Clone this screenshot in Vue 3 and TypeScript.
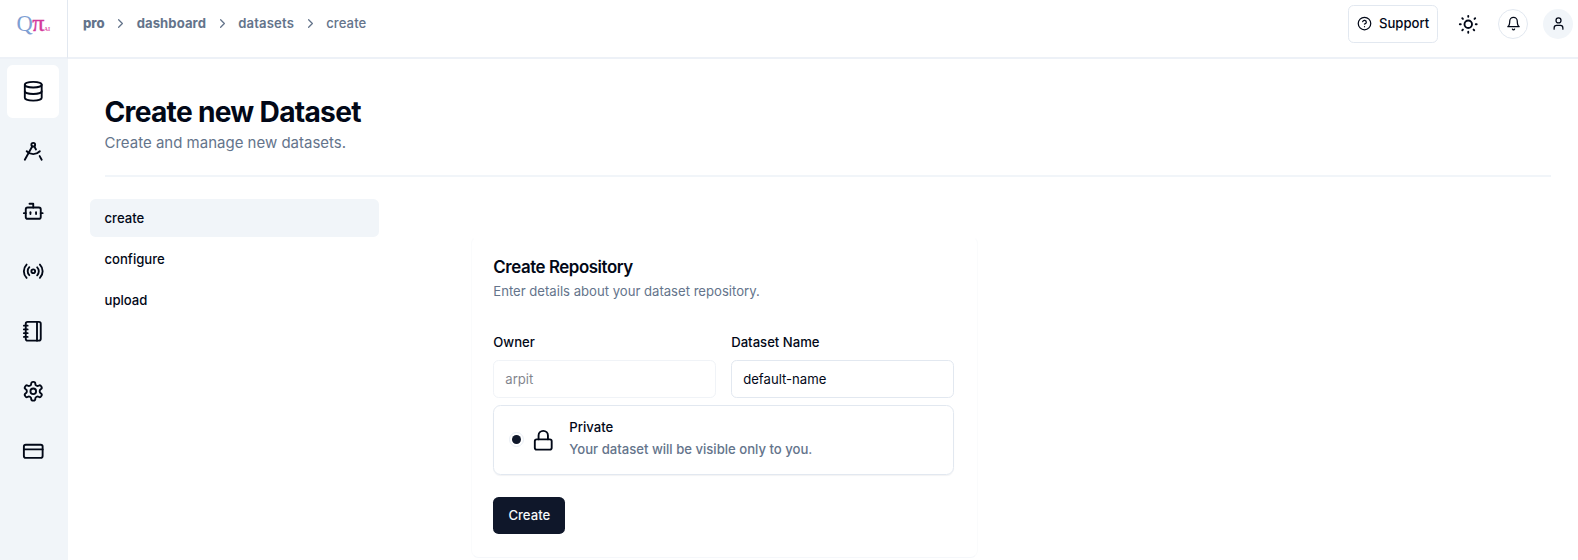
<script setup lang="ts">
type NavIcon = { name: string; body: string; active?: boolean }

const navItems: NavIcon[] = [
  { name: 'datasets', active: true, body: '<ellipse cx="12" cy="5" rx="9" ry="3"/><path d="M3 5V19A9 3 0 0 0 21 19V5"/><path d="M3 12A9 3 0 0 0 21 12"/>' },
  { name: 'design', body: '<circle cx="12" cy="5" r="2"/><path d="m3 21 8.02-14.26"/><path d="m12.99 6.74 1.93 3.44"/><path d="M19 12c-3.87 4-10.13 4-14 0"/><path d="m21 21-2.16-3.84"/>' },
  { name: 'models', body: '<path d="M12 8V4H8"/><rect width="16" height="12" x="4" y="8" rx="2"/><path d="M2 14h2"/><path d="M20 14h2"/><path d="M15 13v2"/><path d="M9 13v2"/>' },
  { name: 'endpoints', body: '<path d="M4.9 19.1C1 15.2 1 8.8 4.9 4.9"/><path d="M7.8 16.2c-2.3-2.3-2.3-6.1 0-8.5"/><circle cx="12" cy="12" r="2"/><path d="M16.2 7.8c2.3 2.3 2.3 6.1 0 8.5"/><path d="M19.1 4.9C23 8.8 23 15.1 19.1 19"/>' },
  { name: 'notebooks', body: '<path d="M2 6h4"/><path d="M2 10h4"/><path d="M2 14h4"/><path d="M2 18h4"/><rect width="16" height="20" x="4" y="2" rx="2"/><path d="M16 2v20"/>' },
  { name: 'settings', body: '<path d="M12.22 2h-.44a2 2 0 0 0-2 2v.18a2 2 0 0 1-1 1.73l-.43.25a2 2 0 0 1-2 0l-.15-.08a2 2 0 0 0-2.73.73l-.22.38a2 2 0 0 0 .73 2.73l.15.1a2 2 0 0 1 1 1.72v.51a2 2 0 0 1-1 1.74l-.15.09a2 2 0 0 0-.73 2.73l.22.38a2 2 0 0 0 2.73.73l.15-.08a2 2 0 0 1 2 0l.43.25a2 2 0 0 1 1 1.73V20a2 2 0 0 0 2 2h.44a2 2 0 0 0 2-2v-.18a2 2 0 0 1 1-1.73l.43-.25a2 2 0 0 1 2 0l.15.08a2 2 0 0 0 2.73-.73l.22-.39a2 2 0 0 0-.73-2.73l-.15-.08a2 2 0 0 1-1-1.74v-.5a2 2 0 0 1 1-1.74l.15-.09a2 2 0 0 0 .73-2.73l-.22-.38a2 2 0 0 0-2.73-.73l-.15.08a2 2 0 0 1-2 0l-.43-.25a2 2 0 0 1-1-1.73V4a2 2 0 0 0-2-2z"/><circle cx="12" cy="12" r="3"/>' },
  { name: 'billing', body: '<rect width="20" height="14" x="2" y="5" rx="2"/><path d="M2 10h20"/>' },
]

const crumbs: string[] = ['pro', 'dashboard', 'datasets', 'create']
const steps: string[] = ['create', 'configure', 'upload']
</script>

<template>
  <div class="app">
    <aside class="rail">
      <div class="logo">
        <span class="logo-q">Q</span><span class="logo-pi">π</span><span class="logo-ai">AI</span>
      </div>
      <nav class="rail-nav">
        <a v-for="item in navItems" :key="item.name" class="rail-item" :class="{ active: item.active }">
          <svg class="icon" viewBox="0 0 24 24" v-html="item.body" />
        </a>
      </nav>
    </aside>

    <div class="content">
      <header class="topbar">
        <div class="crumbs">
          <template v-for="(c, i) in crumbs" :key="c">
            <svg v-if="i > 0" class="icon chevron" viewBox="0 0 24 24"><path d="m9 18 6-6-6-6" /></svg>
            <span class="crumb" :class="'crumb-' + c">{{ c }}</span>
          </template>
        </div>
        <div class="actions">
          <button class="support">
            <svg class="icon small" viewBox="0 0 24 24"><circle cx="12" cy="12" r="10" /><path d="M9.09 9a3 3 0 0 1 5.83 1c0 2-3 3-3 3" /><path d="M12 17h.01" /></svg>
            <span>Support</span>
          </button>
          <svg class="icon sun" viewBox="0 0 24 24"><circle cx="12" cy="12" r="4" /><path d="M12 3v1M12 20v1M3 12h1M20 12h1m-1.636-6.364-.707.707M6.343 17.657l-.707.707M5.636 5.636l.707.707M17.657 17.657l.707.707" /></svg>
          <span class="round bell"><svg class="icon small" viewBox="0 0 24 24"><path d="M6 8a6 6 0 0 1 12 0c0 7 3 9 3 9H3s3-2 3-9" /><path d="M10.3 21a1.94 1.94 0 0 0 3.4 0" /></svg></span>
          <span class="round user"><svg class="icon small" viewBox="0 0 24 24"><path d="M19 21v-2a4 4 0 0 0-4-4H9a4 4 0 0 0-4 4v2" /><circle cx="12" cy="7" r="4" /></svg></span>
        </div>
      </header>

      <main class="page">
        <h1>Create new Dataset</h1>
        <p class="lead">Create and manage new datasets.</p>
        <div class="separator"></div>
        <div class="columns">
          <nav class="steps">
            <a v-for="(s, i) in steps" :key="s" class="step" :class="{ current: i === 0 }">{{ s }}</a>
          </nav>
          <section class="card">
            <h2>Create Repository</h2>
            <p class="card-sub">Enter details about your dataset repository.</p>
            <div class="fields">
              <label class="field"><span>Owner</span><input value="arpit" disabled /></label>
              <label class="field"><span>Dataset Name</span><input value="default-name" /></label>
            </div>
            <div class="privacy">
              <span class="radio"></span>
              <svg class="icon lock" viewBox="0 0 24 24"><rect width="18" height="11" x="3" y="11" rx="2" /><path d="M7 11V7a5 5 0 0 1 10 0v4" /></svg>
              <div class="privacy-text">
                <span>Private</span>
                <span class="privacy-sub">Your dataset will be visible only to you.</span>
              </div>
            </div>
            <button class="submit">Create</button>
          </section>
        </div>
      </main>
    </div>
  </div>
</template>

<style>
body { margin: 0; background: #fff; }
</style>

<style scoped>
* { box-sizing: border-box; }
.app {
  display: flex;
  width: 100%;
  height: 560px;
  overflow: hidden;
  font-family: Inter, "Liberation Sans", sans-serif;
  font-size: 13.125px;
  line-height: 18.75px;
  color: #020817;
}
h1, h2, p { margin: 0; }
button, input { font: inherit; color: inherit; letter-spacing: inherit; }
.icon {
  display: block;
  flex: none;
  width: 22.5px;
  height: 22.5px;
  fill: none;
  stroke: currentColor;
  stroke-width: 2;
  stroke-linecap: round;
  stroke-linejoin: round;
}
.icon.small { width: 15px; height: 15px; }

.rail { flex: none; width: 68px; background: #f1f5f9; }
.logo {
  display: flex;
  align-items: baseline;
  height: 59px;
  padding: 9px 0 0 16.5px;
  background: #fff;
  border-right: 1px solid #e2e8f0;
  border-bottom: 2px solid #edf1f7;
  font-family: "Liberation Serif", serif;
  line-height: 28px;
}
.logo-q { font-size: 22.5px; color: #7f9fd3; letter-spacing: -0.6px; }
.logo-pi { width: 11.8px; font-size: 24px; color: #d3399b; -webkit-text-stroke: 0.4px #d3399b; }
.logo-ai { font-size: 5.5px; font-weight: bold; color: #e04fa6; }
.rail-nav { display: flex; flex-direction: column; gap: 7.5px; padding: 6px 0 0 6.6px; }
.rail-item {
  display: flex;
  align-items: center;
  justify-content: center;
  width: 52.5px;
  height: 52.5px;
  border-radius: 5.6px;
}
.rail-item.active { background: #fff; }

.content { flex: 1; min-width: 0; }
.topbar {
  display: flex;
  justify-content: space-between;
  height: 59px;
  padding: 5px 5px 0 15px;
  border-bottom: 2px solid #edf1f7;
}
.crumbs { display: flex; align-items: center; height: 37.5px; color: #64748b; font-weight: 500; }
.chevron { width: 15px; height: 15px; margin: 0 8.6px; }
.crumb { letter-spacing: 0.07px; }
.crumb-pro { font-weight: 800; letter-spacing: -0.05px; }
.crumb-dashboard { font-weight: 700; }
.crumb-datasets { font-weight: 600; letter-spacing: 0.15px; }
.actions { display: flex; align-items: center; height: 37.5px; }
.support {
  display: flex;
  align-items: center;
  gap: 7.5px;
  width: 90px;
  height: 37.5px;
  padding: 0 0 0 8px;
  background: #fff;
  border: 1px solid #e2e8f0;
  border-radius: 5.6px;
  font-weight: 500;
}
.sun { margin: 0 19px; }
.round {
  display: flex;
  align-items: center;
  justify-content: center;
  width: 30px;
  height: 30px;
  border-radius: 50%;
}
.bell { border: 1px solid #e2e8f0; }
.user { margin-left: 15px; background: #f1f5f9; }

.page { padding: 37px 27px 0 36.5px; }
h1 { font-size: 28.125px; line-height: 33.75px; font-weight: 700; letter-spacing: -0.7px; }
.lead { margin-top: 2.2px; font-size: 15px; line-height: 22.5px; color: #64748b; }
.separator { height: 2px; margin-top: 20.8px; background: #f1f5f9; }
.columns { display: flex; align-items: flex-start; }
.steps { display: flex; flex-direction: column; gap: 3.75px; width: 289px; margin: 22px 0 0 -15px; }
.step {
  display: flex;
  align-items: center;
  height: 37.5px;
  padding-left: 15px;
  border-radius: 5.6px;
  font-weight: 500;
}
.step.current { background: #f1f5f9; }

.card {
  width: 507px;
  height: 322px;
  margin: 59px 0 0 92px;
  padding: 21px 22.4px 0 21.8px;
  border: 1px solid #fafbfc;
  border-top-color: transparent;
  border-bottom-color: #f5f7fa;
  border-radius: 7.5px;
}
h2 { font-size: 16.875px; line-height: 18px; font-weight: 600; letter-spacing: -0.42px; }
.card-sub { margin-top: 5.5px; color: #64748b; }
.fields { display: grid; grid-template-columns: 1fr 1fr; gap: 15px; margin-top: 32.5px; }
.field { display: flex; flex-direction: column; gap: 8.5px; font-weight: 500; }
.field input {
  width: 100%;
  height: 37.5px;
  padding: 0 11px;
  border: 1px solid #e2e8f0;
  border-radius: 5.6px;
  background: #fff;
  font-weight: 400;
}
.field input:disabled { opacity: 0.5; }
.privacy {
  display: flex;
  align-items: center;
  height: 69.5px;
  margin-top: 7.5px;
  padding-left: 15px;
  border: 1px solid #e2e8f0;
  border-radius: 7.5px;
  box-shadow: 0 1px 1px rgba(15, 23, 42, 0.05);
  font-weight: 500;
}
.radio {
  display: flex;
  align-items: center;
  justify-content: center;
  width: 15px;
  height: 15px;
  border: 1px solid #e9eef5;
  border-radius: 50%;
}
.radio::after { content: ""; width: 9px; height: 9px; border-radius: 50%; background: #0f172a; }
.lock { margin: 0 15px 0 7.5px; }
.privacy-text { display: flex; flex-direction: column; gap: 3px; padding-bottom: 2.5px; }
.privacy-sub { color: #64748b; }
.submit {
  display: block;
  width: 72px;
  height: 37.5px;
  margin-top: 22px;
  padding: 0;
  border: 0;
  border-radius: 5.6px;
  background: #0f172a;
  color: #f8fafc;
  font-weight: 500;
}
</style>
